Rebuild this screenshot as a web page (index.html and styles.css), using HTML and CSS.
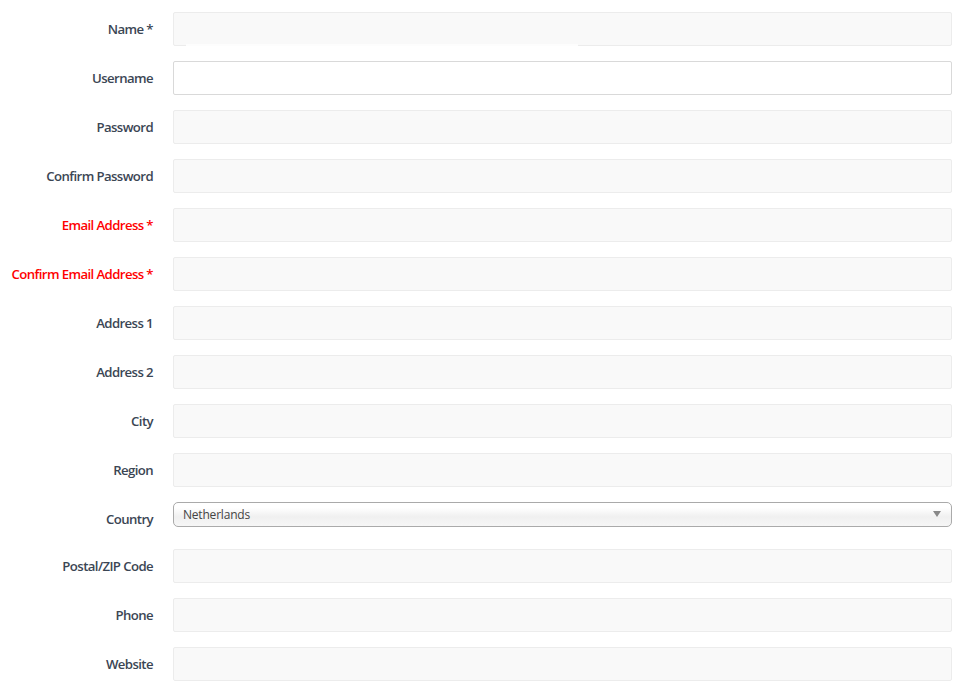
FILE: index.html
```html
<!DOCTYPE html>
<html>
<head>
<meta charset="utf-8">
<link rel="stylesheet" href="styles.css">
</head>
<body>
<form class="form">
  <div class="row"><label class="lbl">Name *</label><div class="field name-field"><span class="box"></span></div></div>
  <div class="row"><label class="lbl">Username</label><div class="field"><span class="box white"></span></div></div>
  <div class="row"><label class="lbl">Password</label><div class="field"><span class="box"></span></div></div>
  <div class="row"><label class="lbl">Confirm Password</label><div class="field"><span class="box"></span></div></div>
  <div class="row"><label class="lbl req">Email Address *</label><div class="field"><span class="box"></span></div></div>
  <div class="row"><label class="lbl req">Confirm Email Address *</label><div class="field"><span class="box"></span></div></div>
  <div class="row"><label class="lbl">Address 1</label><div class="field"><span class="box"></span></div></div>
  <div class="row"><label class="lbl">Address 2</label><div class="field"><span class="box"></span></div></div>
  <div class="row"><label class="lbl">City</label><div class="field"><span class="box"></span></div></div>
  <div class="row"><label class="lbl">Region</label><div class="field"><span class="box"></span></div></div>
  <div class="row row-select"><label class="lbl">Country</label><div class="field"><span class="select"><span class="sel-text">Netherlands</span><span class="arrow"></span></span></div></div>
  <div class="row"><label class="lbl">Postal/ZIP Code</label><div class="field"><span class="box"></span></div></div>
  <div class="row"><label class="lbl">Phone</label><div class="field"><span class="box"></span></div></div>
  <div class="row"><label class="lbl">Website</label><div class="field"><span class="box"></span></div></div>
</form>
</body>
</html>
```
FILE: styles.css
```css
html, body { margin: 0; padding: 0; background: #fff; }
body { font-family: "Open Sans", "Liberation Sans", sans-serif; }
.form { display: flex; flex-direction: column; padding: 12px 10px 0 0; gap: 15px; }
.row { display: grid; grid-template-columns: 153px 779px; column-gap: 20px; align-items: center; height: 34px; }
.lbl { text-align: right; font-size: 13.2px; font-weight: 600; color: #3b4654; letter-spacing: -0.6px; white-space: nowrap; }
.lbl.req { color: #ff0000; }
.field { height: 34px; position: relative; }
.box { display: block; box-sizing: border-box; height: 34px; background: #f9f9f9; border: 1px solid #ececec; border-radius: 2px; }
.box.white { background: #fff; border-color: #d9d9d9; }
.name-field::after { content: ""; position: absolute; left: 13px; width: 392px; bottom: 0; height: 2px; background: #fdfdfd; }
.row-select { height: 32px; align-items: start; }
.row-select .lbl { line-height: 34px; }
.row-select .field { height: 25px; }
.select { display: flex; align-items: center; justify-content: space-between; box-sizing: border-box; height: 25px; border: 1px solid #aaa; border-radius: 5px; background: linear-gradient(#fff 20%, #f0f0f0 60%, #f6f6f6); padding: 0 10px 0 9px; }
.sel-text { font-size: 12px; color: #444; letter-spacing: -0.2px; margin-top: -1px; }
.arrow { width: 0; height: 0; border-left: 4px solid transparent; border-right: 4px solid transparent; border-top: 6px solid #888; margin-top: -2px; }
```
